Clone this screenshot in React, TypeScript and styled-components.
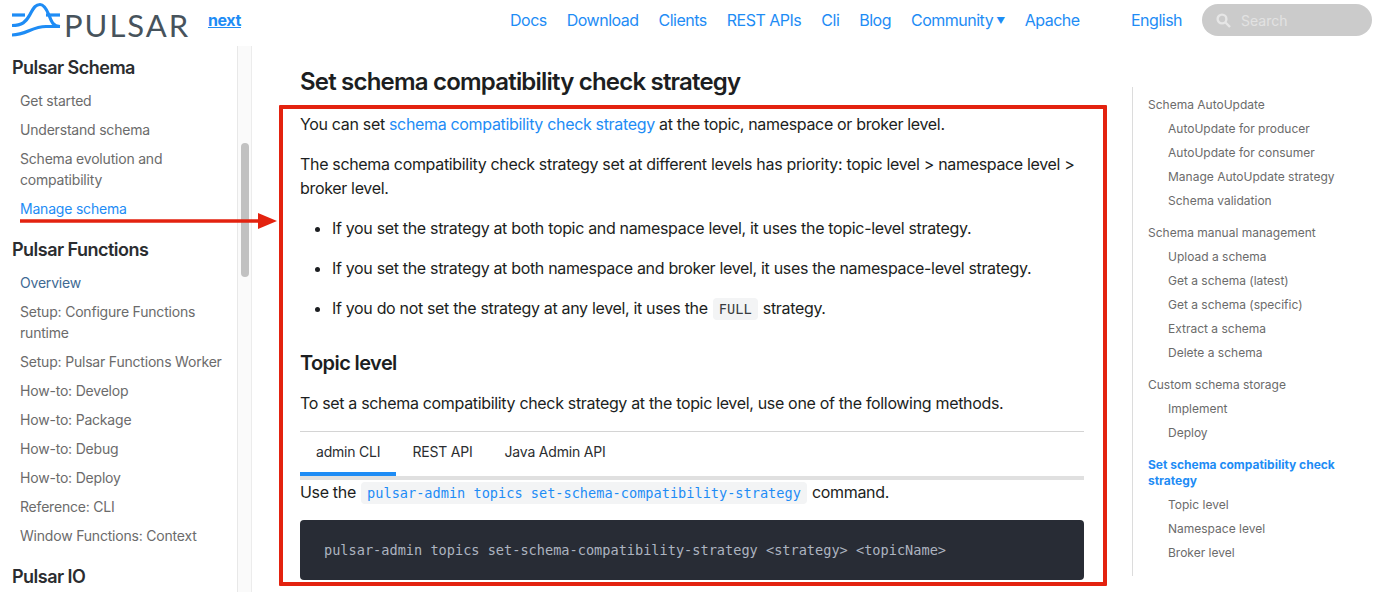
import React from 'react'
import styled, { createGlobalStyle } from 'styled-components'

const sans = `Inter, "Noto Sans", "Liberation Sans", sans-serif`
const mono = `"DejaVu Sans Mono", "Liberation Mono", monospace`
const blue = '#1e8cf5'

const GlobalStyle = createGlobalStyle`
  html, body {
    margin: 0;
    height: 592px;
    overflow: hidden;
    background: #fff;
    font-family: ${sans};
  }
  * { box-sizing: border-box; }
`

const Page = styled.div`
  position: relative;
  width: 1374px;
  height: 592px;
  overflow: hidden;
`

const Header = styled.header`
  display: flex;
  align-items: center;
  height: 46px;
  padding: 0 2px 6px 12px;
`

const Brand = styled.div`
  display: flex;
  align-items: center;
  width: 196px;
`

const Wordmark = styled.span`
  margin-left: 3px;
  font-family: Lato, sans-serif;
  font-size: 31px;
  font-weight: 400;
  letter-spacing: 2px;
  color: #47535c;
  line-height: 34px;
  padding-top: 10px;
`

const Version = styled.a`
  font-size: 16px;
  font-weight: 700;
  letter-spacing: -0.4px;
  color: ${blue};
  text-decoration: underline;
  width: 302px;
`

const Nav = styled.nav`
  display: flex;
  gap: 20px;
  width: 621px;
`

const NavLink = styled.a`
  font-size: 16px;
  letter-spacing: -0.5px;
  color: ${blue};
  white-space: nowrap;
`

const Caret = styled.span`
  font-size: 9px;
  margin-left: 3px;
  vertical-align: 2px;
`

const Language = styled(NavLink)`
  width: 71px;
`

const SearchBox = styled.div`
  display: flex;
  align-items: center;
  gap: 10px;
  width: 170px;
  height: 32px;
  padding-left: 14px;
  border-radius: 16px;
  background: #cbcbcb;
  color: #e2e2e2;
  font-size: 14px;
`

const Body = styled.div`
  display: flex;
  height: 546px;
`

const Sidebar = styled.aside`
  width: 237px;
  padding: 11px 12px 0;
  overflow: hidden;
  flex: none;
`

const SideGroup = styled.section`
  margin-bottom: 20px;
`

const SideTitle = styled.h3`
  margin: 0 0 11px;
  height: 22px;
  font-size: 18px;
  line-height: 22px;
  font-weight: 600;
  letter-spacing: -0.52px;
  color: #2b2d30;
`

const SideItem = styled.div<{ $tone?: 'active' | 'muted' }>`
  padding-left: 8px;
  margin-bottom: 8px;
  font-size: 14px;
  line-height: 21px;
  letter-spacing: -0.2px;
  color: ${({ $tone }) => ($tone === 'active' ? blue : $tone === 'muted' ? '#3f6a93' : '#6b6b6b')};
`

const ScrollTrack = styled.div`
  position: relative;
  flex: none;
  width: 15px;
  background: #fafafa;
  border-left: 1px solid #e8e8e8;
  border-right: 1px solid #ececec;
`

const ScrollThumb = styled.div`
  position: absolute;
  top: 97px;
  left: 3px;
  width: 8px;
  height: 134px;
  border-radius: 4px;
  background: #c1c1c1;
`

const Main = styled.main`
  flex: none;
  width: 880px;
  padding: 21px 48px 0;
  color: #1c1e21;
  font-size: 16px;
  line-height: 24px;
  letter-spacing: -0.33px;
`

const Title = styled.h2`
  margin: 0 0 15px;
  font-size: 24px;
  line-height: 30px;
  font-weight: 600;
  letter-spacing: -0.8px;
`

const Para = styled.p`
  margin: 0 0 16px;
`

const Link = styled.a`
  color: ${blue};
`

const Bullets = styled.ul`
  margin: 0 0 31px;
  padding-left: 32px;
`

const Bullet = styled.li`
  margin-bottom: 16px;
  &:last-child { margin-bottom: 0; }
`

const Subtitle = styled.h3`
  margin: 0 0 15px;
  font-size: 20px;
  line-height: 25px;
  font-weight: 600;
  letter-spacing: -0.6px;
`

const TabBar = styled.div`
  display: flex;
  height: 49px;
  border-top: 1px solid #d4d4d4;
  border-bottom: 4px solid #e0e0e0;
`

const Tab = styled.div<{ $active?: boolean }>`
  height: 44px;
  padding: 8px 16px 0;
  font-size: 14px;
  line-height: 24px;
  letter-spacing: -0.2px;
  color: #2b2d30;
  border-bottom: 4px solid ${({ $active }) => ($active ? blue : 'transparent')};
`

const UseLine = styled.p`
  margin: 0 0 16px;
`

const InlineCode = styled.code`
  display: inline-block;
  margin: 0 1px;
  padding: 0 6px;
  height: 22px;
  border-radius: 4px;
  font-family: ${mono};
  font-size: 13.6px;
  line-height: 22px;
  letter-spacing: 0;
  background: #f3f4f5;
  color: #3a3d41;
`

const LinkCode = styled(InlineCode)`
  color: ${blue};
`

const CodeBlock = styled.pre`
  margin: 0;
  height: 60px;
  padding: 18px 24px;
  border-radius: 4px;
  background: #282c35;
  color: #adb4c0;
  font-family: ${mono};
  font-size: 13.6px;
  line-height: 24px;
  letter-spacing: 0;
  white-space: pre;
`

const Toc = styled.nav`
  flex: none;
  align-self: flex-start;
  width: 220px;
  margin-top: 41px;
  padding: 6px 0 7px 15px;
  border-left: 1px solid #dcdcdc;
`

const TocGroup = styled.div`
  margin-bottom: 16px;
`

const TocItem = styled.div<{ $active?: boolean; $nested?: boolean }>`
  padding-left: ${({ $nested }) => ($nested ? '20px' : '0')};
  margin: 4px 0 8px;
  font-size: 12px;
  line-height: 16px;
  width: 200px;
  font-weight: ${({ $active }) => ($active ? 700 : 400)};
  color: ${({ $active }) => ($active ? blue : '#6b6b6b')};
`

const RedBox = styled.div`
  position: absolute;
  left: 279px;
  top: 105px;
  width: 828px;
  height: 481px;
  border: 4px solid #e3220f;
  border-radius: 1px;
  pointer-events: none;
`

const Arrow = styled.svg`
  position: absolute;
  left: 20px;
  top: 210px;
`

const PulsarLogo = () => (
  <svg width="49" height="36" viewBox="0 0 49 36" fill="none" stroke="#1e8cf5" strokeWidth="3.2">
    <path d="M0 13H13" />
    <path d="M0 23.5C10 23.5 14 20 18 12.5C22 5 24 2.5 28 2.5C32 2.5 34.5 7 37 13C39.5 20 41 24 48 24.5" />
    <path d="M34 13H48" />
    <path d="M0 33C14 33 20 24.5 34 24.5H48" />
  </svg>
)

const SearchIcon = () => (
  <svg width="15" height="15" viewBox="0 0 15 15" fill="none" stroke="#e6e6e6" strokeWidth="2.4">
    <circle cx="6" cy="6" r="4.4" />
    <path d="M9.5 9.5L14 14" />
  </svg>
)

const schemaItems = ['Get started', 'Understand schema', 'Schema evolution and compatibility']
const functionItems = [
  'Setup: Configure Functions runtime',
  'Setup: Pulsar Functions Worker',
  'How-to: Develop',
  'How-to: Package',
  'How-to: Debug',
  'How-to: Deploy',
  'Reference: CLI',
  'Window Functions: Context'
]
const navItems = ['Docs', 'Download', 'Clients', 'REST APIs', 'Cli', 'Blog']
const tocGroups = [
  ['Schema AutoUpdate', 'AutoUpdate for producer', 'AutoUpdate for consumer', 'Manage AutoUpdate strategy', 'Schema validation'],
  ['Schema manual management', 'Upload a schema', 'Get a schema (latest)', 'Get a schema (specific)', 'Extract a schema', 'Delete a schema'],
  ['Custom schema storage', 'Implement', 'Deploy']
]

const App: React.FC = () => {
  return (
    <Page>
      <GlobalStyle />
      <Header>
        <Brand>
          <PulsarLogo />
          <Wordmark>PULSAR</Wordmark>
        </Brand>
        <Version>next</Version>
        <Nav>
          {navItems.map(item => (
            <NavLink key={item}>{item}</NavLink>
          ))}
          <NavLink>
            Community<Caret>▼</Caret>
          </NavLink>
          <NavLink>Apache</NavLink>
        </Nav>
        <Language>English</Language>
        <SearchBox>
          <SearchIcon />
          Search
        </SearchBox>
      </Header>
      <Body>
        <Sidebar>
          <SideGroup>
            <SideTitle>Pulsar Schema</SideTitle>
            {schemaItems.map(item => (
              <SideItem key={item}>{item}</SideItem>
            ))}
            <SideItem $tone="active">Manage schema</SideItem>
          </SideGroup>
          <SideGroup>
            <SideTitle>Pulsar Functions</SideTitle>
            <SideItem $tone="muted">Overview</SideItem>
            {functionItems.map(item => (
              <SideItem key={item}>{item}</SideItem>
            ))}
          </SideGroup>
          <SideGroup>
            <SideTitle>Pulsar IO</SideTitle>
          </SideGroup>
        </Sidebar>
        <ScrollTrack>
          <ScrollThumb />
        </ScrollTrack>
        <Main>
          <Title>Set schema compatibility check strategy</Title>
          <Para>
            You can set <Link>schema compatibility check strategy</Link> at the topic, namespace or broker level.
          </Para>
          <Para>
            The schema compatibility check strategy set at different levels has priority: topic level &gt; namespace level &gt; broker level.
          </Para>
          <Bullets>
            <Bullet>If you set the strategy at both topic and namespace level, it uses the topic-level strategy.</Bullet>
            <Bullet>If you set the strategy at both namespace and broker level, it uses the namespace-level strategy.</Bullet>
            <Bullet>
              If you do not set the strategy at any level, it uses the <InlineCode>FULL</InlineCode> strategy.
            </Bullet>
          </Bullets>
          <Subtitle>Topic level</Subtitle>
          <Para>To set a schema compatibility check strategy at the topic level, use one of the following methods.</Para>
          <TabBar>
            <Tab $active>admin CLI</Tab>
            <Tab>REST API</Tab>
            <Tab>Java Admin API</Tab>
          </TabBar>
          <UseLine>
            Use the <LinkCode>pulsar-admin topics set-schema-compatibility-strategy</LinkCode> command.
          </UseLine>
          <CodeBlock>pulsar-admin topics set-schema-compatibility-strategy &lt;strategy&gt; &lt;topicName&gt;</CodeBlock>
        </Main>
        <Toc>
          {tocGroups.map(group => (
            <TocGroup key={group[0]}>
              {group.map((item, i) => (
                <TocItem key={item} $nested={i > 0}>
                  {item}
                </TocItem>
              ))}
            </TocGroup>
          ))}
          <TocItem $active>Set schema compatibility check strategy</TocItem>
          <TocItem $nested>Topic level</TocItem>
          <TocItem $nested>Namespace level</TocItem>
          <TocItem $nested>Broker level</TocItem>
        </Toc>
      </Body>
      <RedBox />
      <Arrow width="258" height="22" viewBox="0 0 258 22">
        <path d="M0 11H240" stroke="#e3220f" strokeWidth="3.4" />
        <path d="M238 3L257 11L238 19Z" fill="#e3220f" />
      </Arrow>
    </Page>
  )
}

export default App
